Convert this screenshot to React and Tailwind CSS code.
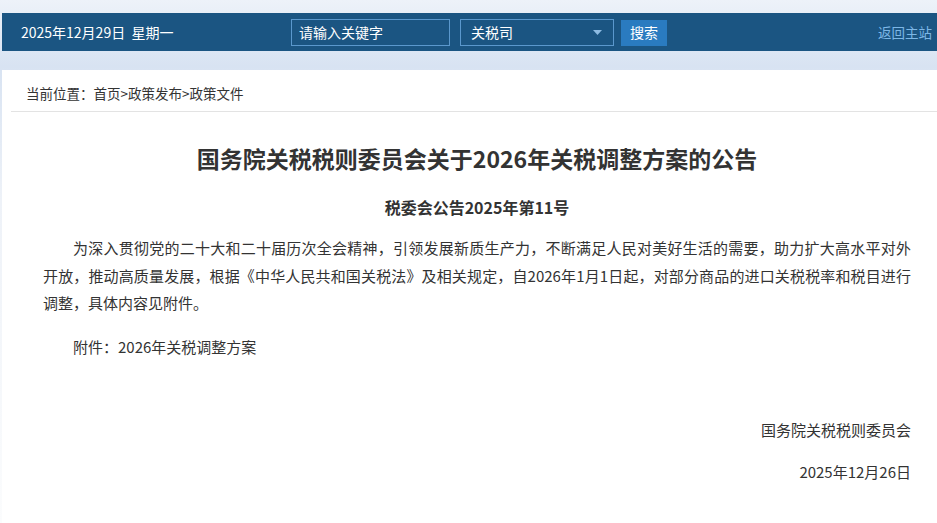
import React from "react";

const FONT = { fontFamily: '"Noto Sans CJK SC", "Microsoft YaHei", sans-serif' };

const Header = () => {
  return (
    <div className="h-[38px] bg-[#1b5582] flex items-center pl-[19px] pr-[20px] text-[14px] text-white">
      <span className="w-[270px] whitespace-pre">2025年12月29日  星期一</span>
      <input
        type="text"
        placeholder="请输入关键字"
        className="w-[159px] h-[27px] border border-[#5b98cd] bg-transparent px-[7px] text-[14px] text-white placeholder:text-white outline-none"
      />
      <div className="ml-[10px] w-[154px] h-[27px] border border-[#5b98cd] flex items-center justify-between pl-[10px] pr-[11px]">
        <span>关税司</span>
        {/* dropdown caret */}
        <svg width="9" height="5" viewBox="0 0 9 5">
          <path d="M0 0 L9 0 L4.5 5 Z" fill="#8dbbe2" />
        </svg>
      </div>
      <button className="ml-[7px] mt-[1px] w-[46px] h-[26px] bg-[#2a7bc0] text-white text-[14px] flex items-center justify-center">
        搜索
      </button>
      <a className="ml-auto text-[#7db7e6] text-[13.5px]">返回主站</a>
    </div>
  );
};

const App = () => {
  return (
    <div
      style={FONT}
      className="min-h-screen w-full overflow-hidden bg-[linear-gradient(to_bottom,#edf2f9_0px,#d8e3f2_66px,#eef2f8_200px,#fbfcfd_523px)]"
    >
      <div className="w-[950px] ml-[2px]">
        <div className="pt-[13px]">
          <Header />
        </div>

        <div className="mt-[19px] bg-white min-h-[460px]">
          {/* breadcrumb */}
          <div className="mx-[9px] border-b border-[#e3e3e3] pl-[15px] pt-[13px] pb-[8px] text-[13.5px] leading-[20px] text-[#333]">
            当前位置：首页&gt;政策发布&gt;政策文件
          </div>

          <div className="px-[41px] pt-[28px] text-[#333]">
            <h1 className="text-center text-[23px] leading-[36px] font-bold">
              国务院关税税则委员会关于2026年关税调整方案的公告
            </h1>
            <p className="mt-[19px] text-center text-[16px] leading-[24px] font-bold">
              税委会公告2025年第11号
            </p>
            <p className="mt-[15px] text-[15px] leading-[27.5px] indent-[30px] text-justify">
              为深入贯彻党的二十大和二十届历次全会精神，引领发展新质生产力，不断满足人民对美好生活的需要，助力扩大高水平对外开放，推动高质量发展，根据《中华人民共和国关税法》及相关规定，自2026年1月1日起，对部分商品的进口关税税率和税目进行调整，具体内容见附件。
            </p>
            <p className="mt-[16px] text-[15px] leading-[27.5px] indent-[30px]">
              附件：2026年关税调整方案
            </p>
            <p className="mt-[56px] text-right text-[15px] leading-[28px]">
              国务院关税税则委员会
            </p>
            <p className="mt-[14px] text-right text-[15px] leading-[28px]">
              2025年12月26日
            </p>
          </div>
        </div>
      </div>
    </div>
  );
};

export default App;
